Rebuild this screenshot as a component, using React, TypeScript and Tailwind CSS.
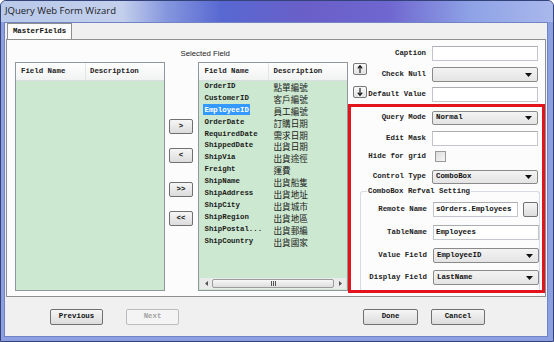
import React from "react";

const mono = "font-['Liberation_Mono','DejaVu_Sans_Mono',monospace] font-bold text-[7.4px]";
const cjk = "font-['Noto_Sans_CJK_TC','Noto_Sans_CJK_SC',sans-serif] text-[8.6px]";

const fields: [string, string][] = [
  ["OrderID", "點單編號"],
  ["CustomerID", "客戶編號"],
  ["EmployeeID", "員工編號"],
  ["OrderDate", "訂購日期"],
  ["RequiredDate", "需求日期"],
  ["ShippedDate", "出貨日期"],
  ["ShipVia", "出貨途徑"],
  ["Freight", "運費"],
  ["ShipName", "出貨船隻"],
  ["ShipAddress", "出貨地址"],
  ["ShipCity", "出貨城市"],
  ["ShipRegion", "出貨地區"],
  ["ShipPostal...", "出貨郵編"],
  ["ShipCountry", "出貨國家"],
];

function Btn({ children, className = "", disabled = false }: { children?: React.ReactNode; className?: string; disabled?: boolean }) {
  return (
    <div
      className={
        "flex items-center justify-center rounded-[2px] border " +
        (disabled
          ? "border-[#b9bdc1] bg-[#f4f4f4] text-[#a3a3a3] "
          : "border-[#707070] bg-gradient-to-b from-[#f6f6f6] to-[#dcdcdc] text-[#111] ") +
        mono +
        " " +
        className
      }
    >
      {children}
    </div>
  );
}

function Arrow() {
  return (
    <svg width="7" height="4" viewBox="0 0 7 4" className="shrink-0">
      <path d="M0 0 H7 L3.5 4 Z" fill="#111" />
    </svg>
  );
}

function Select({ value = "", className = "" }: { value?: string; className?: string }) {
  return (
    <div
      className={
        "flex items-center justify-between rounded-[2px] border border-[#8a8a8a] bg-gradient-to-b from-[#f3f3f3] to-[#e4e4e4] pl-[3px] pr-[5px] text-[#111] " +
        mono +
        " " +
        className
      }
    >
      <span>{value}</span>
      <Arrow />
    </div>
  );
}

function Input({ value = "", className = "" }: { value?: string; className?: string }) {
  return (
    <div
      className={
        "flex items-center overflow-hidden whitespace-nowrap border border-[#c3c7cd] border-t-[#abadb3] bg-white pl-[2px] text-[#111] " +
        mono +
        " " +
        className
      }
    >
      {value}
    </div>
  );
}

function Label({ children, w = "w-[58px]" }: { children: React.ReactNode; w?: string }) {
  return <div className={"shrink-0 whitespace-nowrap text-right text-[#222] " + mono + " " + w}>{children}</div>;
}

function GridHeader() {
  return (
    <div className="flex h-[18px] shrink-0 items-center border-b border-[#d8dde0] bg-gradient-to-b from-white to-[#f1f2f2] text-[#222]">
      <div className={"flex h-full w-[69px] items-center pl-[5px] " + mono}>Field Name</div>
      <div className={"flex h-full items-center border-l border-[#e2e4e6] pl-[4px] " + mono}>Description</div>
    </div>
  );
}

function ScrollBar() {
  return (
    <div className="mx-[1px] mb-[1px] flex h-[11px] shrink-0 items-center bg-[#eaeaea]">
      <div className="flex w-[12px] justify-center">
        <svg width="3" height="5" viewBox="0 0 3 5">
          <path d="M3 0 V5 L0 2.5 Z" fill="#555" />
        </svg>
      </div>
      <div className="flex h-[9px] flex-1 items-center justify-center rounded-[2px] border border-[#9c9c9c] bg-gradient-to-b from-[#f7f7f7] to-[#dedede]">
        <div className="flex gap-[1px]">
          <div className="h-[5px] w-[1px] bg-[#555]" />
          <div className="h-[5px] w-[1px] bg-[#555]" />
          <div className="h-[5px] w-[1px] bg-[#555]" />
        </div>
      </div>
      <div className="flex w-[12px] justify-center">
        <svg width="3" height="5" viewBox="0 0 3 5">
          <path d="M0 0 V5 L3 2.5 Z" fill="#555" />
        </svg>
      </div>
    </div>
  );
}

function UpDown({ down = false }: { down?: boolean }) {
  return (
    <div className="flex h-[12px] w-[14px] items-center justify-center rounded-[2px] border border-[#7a7a7a] bg-gradient-to-b from-[#fafafa] to-[#e2e2e2]">
      <svg width="6" height="8" viewBox="0 0 6 8">
        {down ? (
          <path d="M3 0 V7 M0.8 4.6 L3 7.4 L5.2 4.6" stroke="#111" strokeWidth="1.1" fill="none" />
        ) : (
          <path d="M3 8 V1 M0.8 3.4 L3 0.6 L5.2 3.4" stroke="#111" strokeWidth="1.1" fill="none" />
        )}
      </svg>
    </div>
  );
}

export default function App() {
  return (
    <div className="flex h-[342px] w-[554px] flex-col overflow-hidden rounded-t-[6px] border border-[#34427a] bg-[#8c9fe0]">
      {/* title bar */}
      <div className="flex h-[21px] shrink-0 items-center bg-[linear-gradient(90deg,#b9c9ea_0%,#c3cfec_22%,#8596de_30%,#5868d2_40%,#6a5fc8_55%,#6f66cf_70%,#8ea2e6_85%,#a9b8ec_100%)] pl-[4px]">
        <span className="font-['Open_Sans','Noto_Sans',sans-serif] text-[9.5px] text-[#1a1a1a]">JQuery Web Form Wizard</span>
      </div>

      {/* client area */}
      <div className="mb-[4px] ml-[3px] mr-[5px] flex flex-1 flex-col border border-[#7083c4] bg-[#f0f0f0]">
        {/* tab strip */}
        <div className="flex h-[16px] shrink-0 items-end pl-[2px]">
          <div className={"flex h-[16px] w-[65px] items-center justify-center border border-b-0 border-[#8e8f8f] bg-[#fcfcfc] text-[#111] " + mono}>
            MasterFields
          </div>
        </div>

        {/* tab page */}
        <div className="ml-[1px] mr-[1px] flex h-[258px] shrink-0 border border-[#8e8f8f] bg-[#fcfcfc] pl-[8px]">
          {/* available fields */}
          <div className="mt-[22px] flex h-[229px] w-[150px] flex-col border border-[#8f979c] bg-[#cde8d0]">
            <GridHeader />
          </div>

          {/* mover buttons */}
          <div className="ml-[4px] flex w-[25px] flex-col pt-[79px]">
            <Btn className="h-[15px]">&gt;</Btn>
            <Btn className="mt-[14px] h-[15px]">&lt;</Btn>
            <Btn className="mt-[19px] h-[15px]">&gt;&gt;</Btn>
            <Btn className="mt-[14px] h-[15px]">&lt;&lt;</Btn>
          </div>

          {/* selected fields */}
          <div className="ml-[5px] flex w-[150px] flex-col">
            <div className="-ml-[18px] h-[22px] pt-[9px] font-['Liberation_Sans',sans-serif] text-[7.8px] leading-[10px] text-[#222]">
              Selected Field
            </div>
            <div className="flex h-[229px] flex-col border border-[#8f979c] bg-[#cde8d0]">
              <GridHeader />
              <div className="flex flex-col">
                {fields.map(([n, d], i) => (
                  <div key={n} className="flex h-[11.9px] items-center text-[#1a1a1a]">
                    <div className={"w-[69px] pl-[4px] leading-[11.9px] " + mono}>
                      <span className={i === 2 ? "bg-[#3399ff] px-[1px] py-[1.5px] text-white" : "px-[1px]"}>{n}</span>
                    </div>
                    <div className={"mt-[2px] pl-[5px] leading-[11.9px] " + cjk}>{d}</div>
                  </div>
                ))}
              </div>
              <div className="flex-1" />
              <ScrollBar />
            </div>
          </div>

          {/* properties */}
          <div className="flex w-[197px] flex-col pt-[6px]">
            <div className="flex h-[58px] shrink-0">
              <div className="flex w-[20px] flex-col pl-[5px] pt-[17px]">
                <UpDown />
                <div className="mt-[11px]">
                  <UpDown down />
                </div>
              </div>
              <div className="flex flex-col">
                <div className="flex h-[15px] items-center gap-[6px]">
                  <Label>Caption</Label>
                  <Input className="h-[15px] w-[106px]" />
                </div>
                <div className="mt-[6px] flex h-[15px] items-center gap-[6px]">
                  <Label>Check Null</Label>
                  <Select className="h-[15px] w-[106px]" />
                </div>
                <div className="mt-[5px] flex h-[15px] items-center gap-[6px]">
                  <Label>Default Value</Label>
                  <Input className="h-[15px] w-[106px]" />
                </div>
              </div>
            </div>

            <div className="flex h-[189px] shrink-0 flex-col border-[3px] border-[#e4141d] pl-[16px]">
              <div className="mt-[4px] flex h-[14px] items-center gap-[6px]">
                <Label w="w-[59px]">Query Mode</Label>
                <Select value="Normal" className="h-[14px] w-[106px]" />
              </div>
              <div className="mt-[6px] flex h-[15px] items-center gap-[6px]">
                <Label w="w-[59px]">Edit Mask</Label>
                <Input className="h-[15px] w-[106px]" />
              </div>
              <div className="mt-[5px] flex h-[11px] items-center gap-[6px]">
                <Label w="w-[59px]">Hide for grid</Label>
                <div className="ml-[3px] h-[11px] w-[11px] border border-[#9a9a9a] bg-gradient-to-br from-[#dcdcdc] to-[#f6f6f6]" />
              </div>
              <div className="mt-[8px] flex h-[14px] items-center gap-[6px]">
                <Label w="w-[59px]">Control Type</Label>
                <Select value="ComboBox" className="h-[14px] w-[106px]" />
              </div>

              <fieldset className="-ml-[7px] mr-[2px] mt-[2px] flex flex-1 flex-col rounded-t-[3px] border border-b-0 border-[#d5dbe0] pl-[6px]">
                <legend className={"px-[1px] leading-[10px] text-[#222] " + mono}>ComboBox Refval Setting</legend>
                <div className="mt-[6px] flex h-[15px] items-center gap-[6px]">
                  <Label w="w-[60px]">Remote Name</Label>
                  <Input value="sOrders.Employees" className="h-[15px] w-[85px]" />
                  <Btn className="ml-[-1px] h-[15px] w-[15px]" />
                </div>
                <div className="mt-[8px] flex h-[15px] items-center gap-[6px]">
                  <Label w="w-[60px]">TableName</Label>
                  <Input value="Employees" className="h-[15px] w-[106px]" />
                </div>
                <div className="mt-[8px] flex h-[15px] items-center gap-[6px]">
                  <Label w="w-[60px]">Value Field</Label>
                  <Select value="EmployeeID" className="h-[15px] w-[106px]" />
                </div>
                <div className="mt-[7px] flex h-[15px] items-center gap-[6px]">
                  <Label w="w-[60px]">Display Field</Label>
                  <Select value="LastName" className="h-[15px] w-[106px]" />
                </div>
              </fieldset>
            </div>
          </div>
        </div>

        {/* bottom buttons */}
        <div className="flex pl-[45px] pt-[12px]">
          <Btn className="h-[16px] w-[53px]">Previous</Btn>
          <Btn disabled className="ml-[23px] h-[16px] w-[53px]">Next</Btn>
          <Btn className="ml-[184px] h-[16px] w-[55px]">Done</Btn>
          <Btn className="ml-[13px] h-[16px] w-[54px]">Cancel</Btn>
        </div>
      </div>
    </div>
  );
}
